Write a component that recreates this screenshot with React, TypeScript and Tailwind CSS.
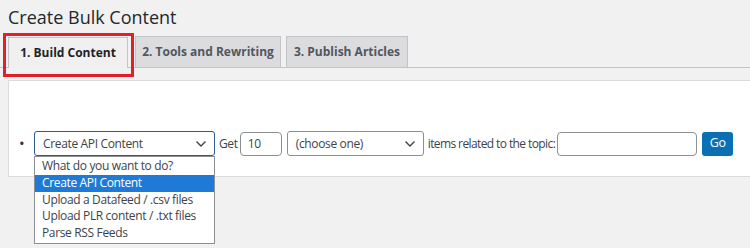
import React from "react";

const Chevron = () => (
  <svg width="12" height="8" viewBox="0 0 12 8" fill="none" stroke="#3c434a" strokeWidth="1.4">
    <path d="M1.5 1.5 L6 6 L10.5 1.5" />
  </svg>
);

export default function App() {
  const options = [
    "What do you want to do?",
    "Create API Content",
    "Upload a Datafeed / .csv files",
    "Upload PLR content / .txt files",
    "Parse RSS Feeds",
  ];
  return (
    <div
      className="relative w-[750px] h-[248px] overflow-hidden bg-[#f1f1f1] text-[#2c3338]"
      style={{ fontFamily: '"Open Sans", "Noto Sans", sans-serif' }}
    >
      <h1 className="pl-[8px] pt-[4px] text-[18px] leading-[26px] font-normal text-[#23282d]">
        Create Bulk Content
      </h1>
      <div className="relative mt-[6px] flex h-[32px] items-end border-b border-[#c3c4c7] pl-[8px]">
        <div className="relative -mb-px flex h-[31px] w-[120px] items-center justify-center border border-b-0 border-[#c3c4c7] bg-[#f0f0f1] text-[12px] font-bold text-[#1d2327]">
          1. Build Content
          <div className="pointer-events-none absolute left-[-6px] top-[-5px] h-[44px] w-[131px] border-[3px] border-[#e1212a]" />
        </div>
        <div className="ml-[7px] flex h-[31px] w-[146px] items-center justify-center border border-b-0 border-[#c3c4c7] bg-[#dcdcde] text-[12px] font-bold text-[#50575e]">
          2. Tools and Rewriting
        </div>
        <div className="ml-[5px] flex h-[31px] w-[122px] items-center justify-center border border-b-0 border-[#c3c4c7] bg-[#dcdcde] text-[12px] font-bold text-[#50575e]">
          3. Publish Articles
        </div>
      </div>
      <div className="ml-[8px] mt-[12px] h-[97px] border border-r-0 border-[#dcdcde] bg-white">
        <div className="relative mt-[50px] flex items-center text-[12px] tracking-[-0.35px] text-[#3c434a]">
          <span className="ml-[10px] w-[15px] text-[15px] leading-none text-[#2c3338]">•</span>
          <div className="relative">
            <div className="flex h-[25px] w-[181px] items-center justify-between rounded-[3px] border border-[#2a5d8f] pl-[8px] pr-[7px]">
              <span>Create API Content</span>
              <Chevron />
            </div>
            <div className="absolute left-0 top-[25px] z-10 w-[181px] border border-[#8c8f94] bg-white py-[1px]">
              {options.map((o, i) => (
                <div
                  key={o}
                  className={
                    "h-[16.8px] pl-[7px] leading-[16.8px] " +
                    (i === 1 ? "bg-[#1e7ad6] text-white" : "text-[#3c434a]")
                  }
                >
                  {o}
                </div>
              ))}
            </div>
          </div>
          <span className="ml-[4px] mr-[2px]">Get</span>
          <div className="flex h-[24px] w-[42px] items-center rounded-[4px] border border-[#8c8f94] pl-[7px]">10</div>
          <div className="ml-[5px] flex h-[25px] w-[137px] items-center justify-between rounded-[3px] border border-[#8c8f94] pl-[8px] pr-[7px]">
            <span>(choose one)</span>
            <Chevron />
          </div>
          <span className="ml-[4px] mr-[2px] tracking-[-0.6px]">items related to the topic:</span>
          <div className="h-[24px] w-[140px] rounded-[4px] border border-[#8c8f94]" />
          <div className="ml-[5px] flex h-[24px] w-[31px] items-center justify-center rounded-[3px] bg-[#0b70b3] text-[12.5px] text-white">
            Go
          </div>
        </div>
      </div>
    </div>
  );
}
